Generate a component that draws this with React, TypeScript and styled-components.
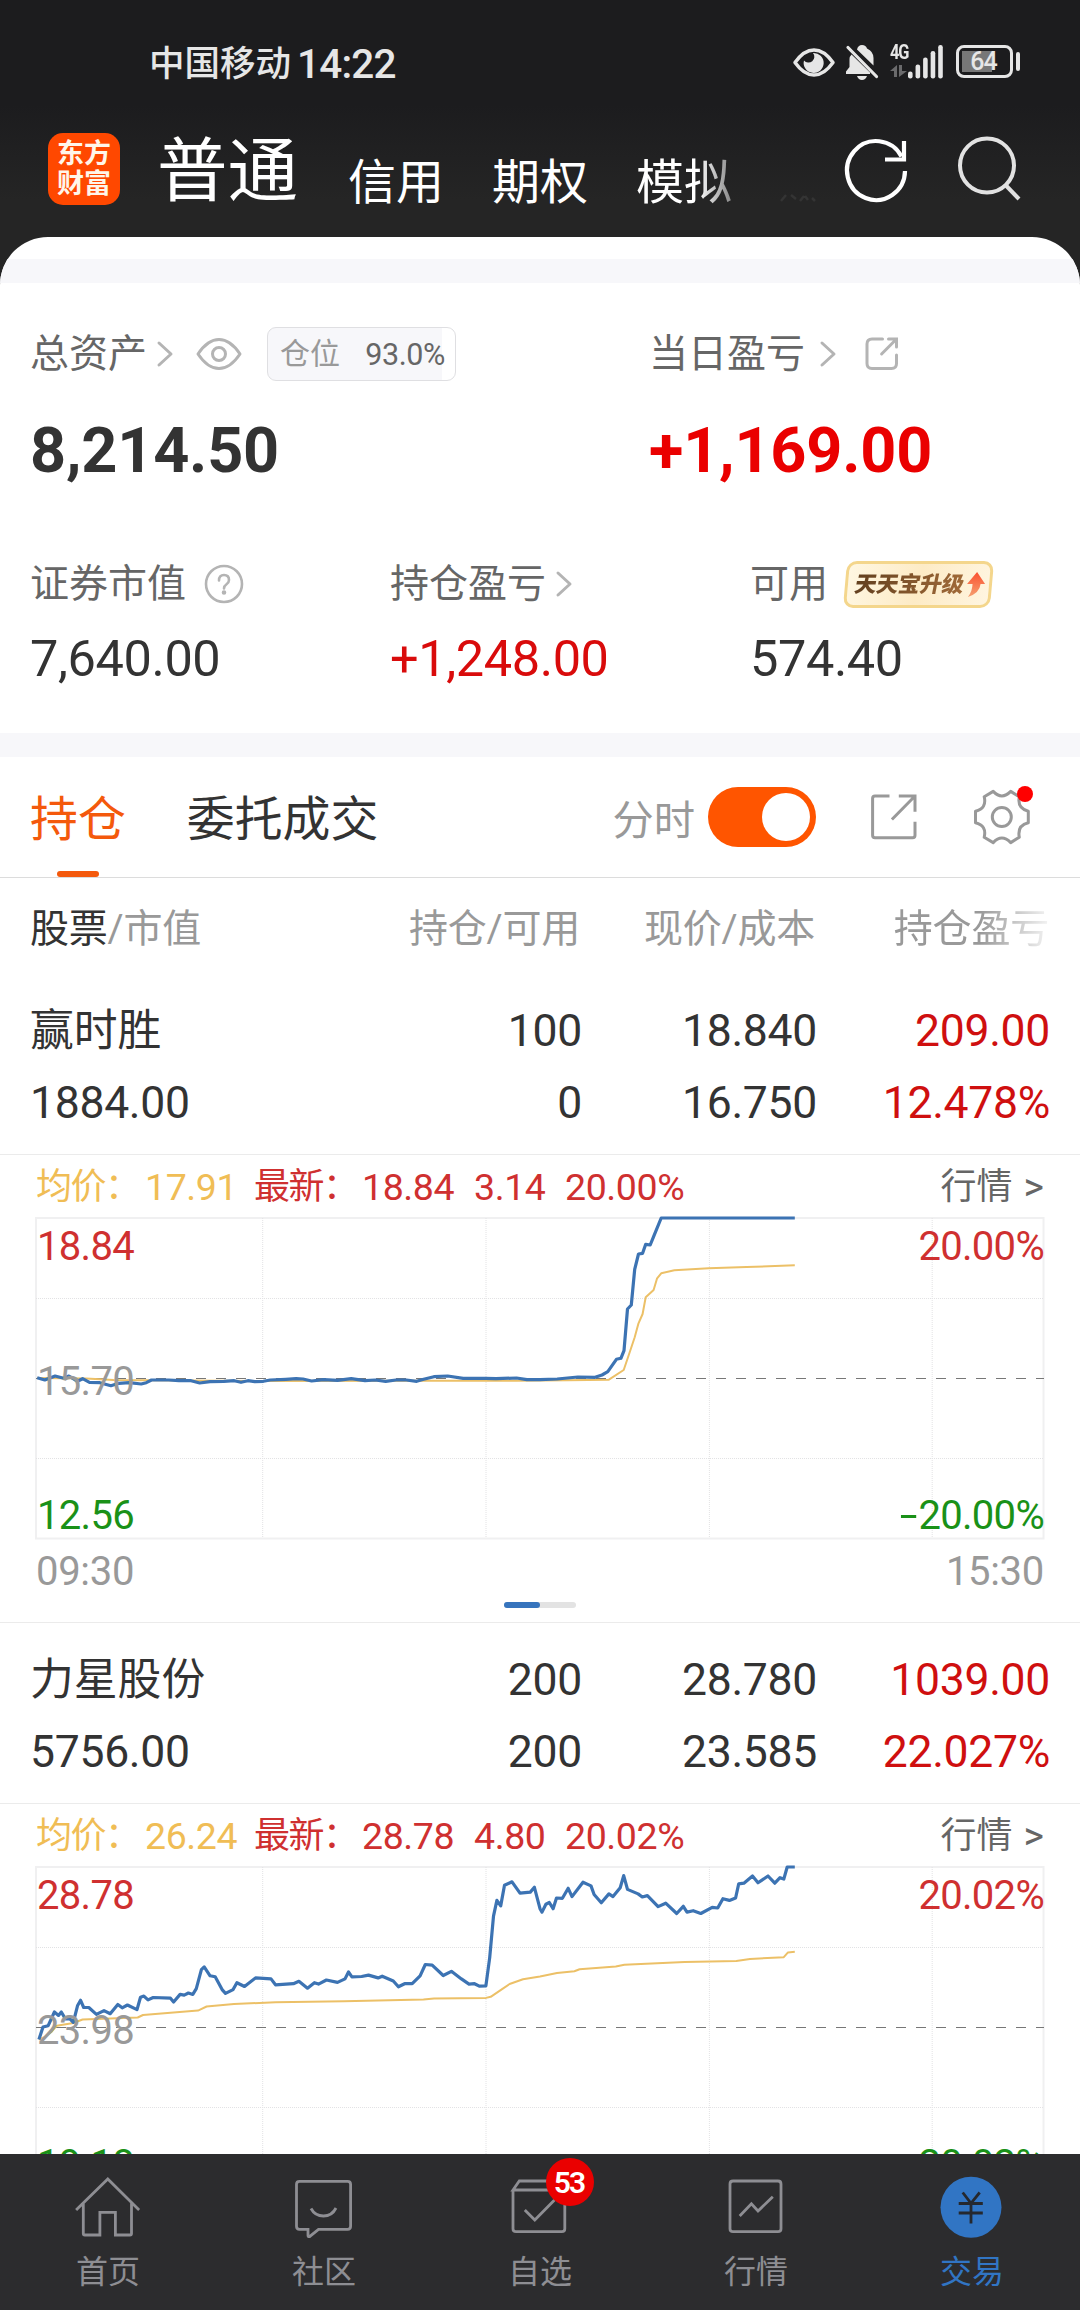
import React from 'react';
import styled, { createGlobalStyle, css } from 'styled-components';

const GlobalStyle = createGlobalStyle`
  *, *::before, *::after { box-sizing: border-box; }
  body {
    margin: 0;
    background: #fff;
    color: #333;
    font-family: Roboto, "Noto Sans CJK SC", sans-serif;
    -webkit-font-smoothing: antialiased;
  }
  svg { display: block; flex: none; overflow: visible; }
`;

const Screen = styled.div`
  width: 1080px;
  height: 2310px;
  overflow: hidden;
  display: flex;
  flex-direction: column;
  background: linear-gradient(#1c1c1e 0, #1c1c1e 105px, #252525 200px);
`;

/* ---------- status bar ---------- */

const StatusBar = styled.div`
  height: 127px;
  flex: none;
  display: flex;
  align-items: center;
  justify-content: space-between;
  padding: 1px 60px 0 149px;
  color: #e6e6e6;
`;

const Carrier = styled.div`
  display: flex;
  align-items: center;
  gap: 6px;
  font-size: 35.5px;
  font-weight: 500;
  line-height: 50px;
`;

const Clock = styled.span`
  font-size: 40.5px;
  letter-spacing: -0.8px;
`;

const StatusIcons = styled.div`
  display: flex;
  align-items: flex-start;
  height: 34px;
  margin-top: -4px;
`;

const Network = styled.div`
  display: flex;
  flex-direction: column;
  gap: 5px;
  margin-left: 11px;
  width: 20px;
  font-size: 21px;
  font-weight: 700;
  line-height: 15px;
  letter-spacing: -1.5px;
  span { display: block; transform: scaleX(0.78); transform-origin: left; }
`;

const Battery = styled.div`
  width: 57px;
  height: 33px;
  margin-left: 13px;
  padding-right: 2px;
  border: 3px solid #e6e6e6;
  border-radius: 8px;
  background: linear-gradient(#777, #777) 3px 3px / 30px 21px no-repeat;
  text-align: center;
  font-size: 25px;
  font-weight: 500;
  line-height: 28px;
  letter-spacing: -1px;
`;

const BatteryTip = styled.div`
  width: 4px;
  height: 19px;
  margin: 7px 0 0 3px;
  border-radius: 2px;
  background: #e6e6e6;
`;

/* ---------- account header ---------- */

const Header = styled.header`
  height: 110px;
  flex: none;
  display: flex;
  align-items: center;
  padding: 0 58px 26px 48px;
`;

const Logo = styled.div`
  width: 72px;
  height: 72px;
  border-radius: 15px;
  background: #ff4800;
  color: #fff6ea;
  display: flex;
  flex-direction: column;
  align-items: center;
  justify-content: center;
  font-size: 27px;
  font-weight: 700;
  line-height: 30px;
`;

const AccountTabs = styled.nav`
  display: flex;
  align-items: flex-start;
  align-self: flex-start;
  gap: 48px;
  width: 663px;
  margin-left: 37px;
  color: #fff;
  white-space: nowrap;
  svg { margin-top: 67px; }
`;

const AccountTab = styled.span<{ $active?: boolean; $faded?: boolean }>`
  padding-top: 14px;
  font-size: 48px;
  line-height: 84px;
  ${p => p.$active && css`
    padding-top: 3px;
    margin-right: 2px;
    font-size: 70.5px;
  `}
  ${p => p.$faded && css`
    mask-image: linear-gradient(90deg, #000 64%, rgba(0, 0, 0, 0.45) 100%);
  `}
`;

const HeaderIcons = styled.div`
  display: flex;
  align-items: center;
  gap: 51px;
  margin-left: 24.5px;
`;

/* ---------- content ---------- */

const Sheet = styled.main`
  flex: 1;
  min-height: 0;
  overflow: hidden;
  border-radius: 48px 48px 0 0;
  background: #fff;
  padding-top: 22px;
`;

const Band = styled.div`
  height: 24px;
  background: #f7f7fa;
`;

const Summary = styled.section`
  height: 450px;
  padding: 40px 30px 0;
`;

const SummaryRow = styled.div<{ $cols: string }>`
  display: grid;
  grid-template-columns: ${p => p.$cols};
`;

const Metric = styled.div`
  display: flex;
  flex-direction: column;
`;

const MetricLabel = styled.div`
  height: 62px;
  display: flex;
  align-items: center;
  color: #666;
  white-space: nowrap;
`;

const LabelText = styled.span`
  font-size: 39px;
  line-height: 50px;
`;

const BigValue = styled.div<{ $up?: boolean }>`
  height: 130px;
  line-height: 132px;
  font-size: 63px;
  font-weight: 700;
  letter-spacing: -0.2px;
  color: ${p => (p.$up ? '#ea0000' : '#333')};
`;

const Value = styled.div<{ $up?: boolean }>`
  height: 100px;
  line-height: 88px;
  font-size: 50.5px;
  letter-spacing: -0.4px;
  color: ${p => (p.$up ? '#d90b0b' : '#333')};
`;

const Position = styled.span`
  display: flex;
  align-items: center;
  justify-content: space-between;
  width: 189px;
  height: 54px;
  margin-left: 25px;
  padding: 0 10px 0 12px;
  border: 1px solid #dfdfe2;
  border-radius: 9px;
  background: linear-gradient(90deg, #f7f7fa 93%, #fff 93%);
  font-size: 30px;
  line-height: 50px;
  color: #999;
  b { padding-top: 2px; font-weight: 400; color: #666; font-size: 30.5px; letter-spacing: -0.4px; }
`;

const Upgrade = styled.span`
  display: flex;
  align-items: center;
  gap: 3px;
  width: 147px;
  height: 47px;
  margin-left: 17px;
  padding-left: 7px;
  border: 3px solid #f4d68c;
  border-radius: 10px;
  background: linear-gradient(100deg, #fff7e2, #fdebc6 50%, #fff5e0);
  transform: skewX(-5deg);
`;

const UpgradeText = styled.span`
  font-size: 22px;
  font-weight: 900;
  letter-spacing: -0.3px;
  line-height: 30px;
  transform: skewX(-6deg);
  color: transparent;
  background: linear-gradient(90deg, #63401f, #a16a38);
  background-clip: text;
  -webkit-background-clip: text;
`;

/* ---------- holdings toolbar ---------- */

const Toolbar = styled.div`
  height: 121px;
  display: flex;
  align-items: center;
  padding: 0 49px 0 30px;
  border-bottom: 1px solid #dcdcdc;
`;

const ViewTab = styled.div<{ $active?: boolean }>`
  height: 120px;
  margin-right: 61px;
  display: flex;
  flex-direction: column;
  align-items: center;
  justify-content: space-between;
  font-size: 47.9px;
  line-height: 127px;
  color: ${p => (p.$active ? '#f4590c' : '#333')};
  &::after {
    content: '';
    flex: none;
    width: 42px;
    height: 6px;
    margin-top: -13px;
    border-radius: 3px;
    background: ${p => (p.$active ? '#f4590c' : 'transparent')};
  }
`;

const Minute = styled.div`
  display: flex;
  align-items: center;
  gap: 13px;
  margin-left: auto;
  font-size: 41.3px;
  color: #999;
`;

const Toggle = styled.span`
  width: 108px;
  height: 60px;
  padding: 6px;
  display: flex;
  justify-content: flex-end;
  border-radius: 30px;
  background: #ff5500;
  &::after { content: ''; width: 48px; height: 48px; border-radius: 50%; background: #fff; }
`;

const ShareSlot = styled.div`
  margin: 0 54px 0 53px;
`;

const SettingSlot = styled.div`
  position: relative;
  &::after {
    content: '';
    position: absolute;
    right: -2px;
    top: -2px;
    width: 16px;
    height: 16px;
    border-radius: 50%;
    background: #ff0000;
  }
`;

/* ---------- table ---------- */

const gridColumns = css`
  display: grid;
  grid-template-columns: 300px 252px 235px 233px;
  padding: 0 30px;
`;

const TableHead = styled.div`
  ${gridColumns}
  height: 96px;
  line-height: 103px;
  font-size: 39px;
  letter-spacing: -0.2px;
  color: #999;
  text-align: right;
`;

const HeadCell = styled.div<{ $fade?: boolean }>`
  padding-right: 2px;
  white-space: nowrap;
  &:first-child { text-align: left; }
  b { font-weight: 400; color: #333; }
  ${p => p.$fade && css`
    padding-right: 1px;
    mask-image: linear-gradient(90deg, #000 70%, rgba(0, 0, 0, 0.1) 100%);
  `}
`;

const Holding = styled.div`
  ${gridColumns}
  height: 181px;
  padding-top: 21px;
  grid-auto-rows: 72px;
  line-height: 73px;
  font-size: 44.5px;
  letter-spacing: -0.3px;
  text-align: right;
  border-bottom: 1px solid #ebebeb;
`;

const Cell = styled.div<{ $name?: boolean; $left?: boolean; $up?: boolean }>`
  ${p => p.$left && 'text-align: left;'}
  ${p => p.$name && 'font-size: 43.8px; letter-spacing: 0;'}
  ${p => p.$up && 'color: #cf0f0f;'}
`;

/* ---------- minute chart ---------- */

const ChartBlock = styled.div`
  height: 468px;
  padding: 0 36px;
  border-bottom: 1px solid #ebebeb;
`;

const InfoLine = styled.div`
  display: grid;
  grid-template-columns: 109px 109px 108px 112px 91px 1fr auto;
  height: 63px;
  line-height: 64px;
  font-size: 36px;
  white-space: nowrap;
  color: #cf3030;
`;

const Caption = styled.span<{ $avg?: boolean }>`
  letter-spacing: -1.5px;
  ${p => p.$avg && 'color: #f0bd55;'}
`;

const Num = styled.span<{ $avg?: boolean }>`
  font-size: 37.5px;
  letter-spacing: -0.4px;
  ${p => p.$avg && 'color: #f0bd55;'}
`;

const Quote = styled.span`
  display: flex;
  gap: 11px;
  color: #666;
  b { font-weight: 400; font-size: 39px; }
`;

const Plot = styled.div`
  position: relative;
  height: 321px;
  padding: 8px 0 4px 1px;
  display: flex;
  flex-direction: column;
  justify-content: space-between;
  svg { position: absolute; left: 0; top: 0; }
`;

const Scale = styled.div<{ $tone: 'up' | 'flat' | 'down' }>`
  position: relative;
  display: flex;
  justify-content: space-between;
  height: 40px;
  line-height: 41px;
  font-size: 40px;
  letter-spacing: -0.7px;
  color: ${p => ({ up: '#cf3030', flat: '#999', down: '#1a9118' })[p.$tone]};
`;

const Minus = styled.span`
  display: inline-block;
  margin-right: 2px;
  transform: scaleX(1.6);
  transform-origin: right;
`;

const TimeAxis = styled.div`
  display: flex;
  justify-content: space-between;
  height: 63px;
  line-height: 66px;
  font-size: 40px;
  letter-spacing: -0.3px;
  color: #999;
`;

const Pager = styled.div`
  width: 72px;
  height: 6px;
  margin: 0 auto;
  border-radius: 3px;
  background: #e3e3e3;
  &::before {
    content: '';
    display: block;
    width: 36px;
    height: 6px;
    border-radius: 3px;
    background: #3674bd;
  }
`;

/* ---------- bottom navigation ---------- */

const BottomNav = styled.nav`
  height: 156px;
  flex: none;
  display: grid;
  grid-template-columns: repeat(5, 1fr);
  padding-top: 21px;
  background: #2c2c2e;
`;

const NavItem = styled.div<{ $active?: boolean }>`
  position: relative;
  display: flex;
  flex-direction: column;
  align-items: center;
  gap: 9px;
  font-size: 32px;
  line-height: 48px;
  color: ${p => (p.$active ? '#3175c4' : '#8e8e93')};
`;

const Badge = styled.span`
  position: absolute;
  left: 114px;
  top: -17px;
  width: 48px;
  height: 48px;
  padding-right: 2px;
  border-radius: 50%;
  background: #ea0000;
  color: #fff;
  text-align: center;
  font-size: 30px;
  font-weight: 600;
  line-height: 49px;
  letter-spacing: -2px;
`;

/* ---------- icons ---------- */

const Chevron = ({ gap }: { gap: number }) => (
  <svg width="16" height="26" viewBox="0 0 16 26" fill="none" stroke="#b4b4b4" strokeWidth="3" strokeLinecap="round" strokeLinejoin="round" style={{ marginLeft: gap }}>
    <path d="M2 2 14 13 2 24" />
  </svg>
);

const EyeOutline = () => (
  <svg width="46" height="34" viewBox="0 0 46 34" fill="none" stroke="#b4b4b4" strokeWidth="3" style={{ marginLeft: 23 }}>
    <path d="M2 17C8 8 15 2.500 23 2.500S38 8 44 17C38 26 31 31.500 23 31.500S8 26 2 17Z" strokeLinejoin="round" />
    <circle cx="23" cy="17" r="6.500" />
  </svg>
);

const ShareSmall = () => (
  <svg width="36" height="36" viewBox="0 0 36 36" fill="none" stroke="#b4b4b4" strokeWidth="3" strokeLinecap="round" style={{ marginLeft: 28 }}>
    <path d="M18.500 3H8Q3 3 3 8V27.500Q3 32.500 8 32.500H27.500Q32.500 32.500 32.500 27.500V19M24.500 3H32.500V11M17.600 18 32 3.500" />
  </svg>
);

const ShareLarge = () => (
  <svg width="50" height="50" viewBox="0 0 50 50" fill="none" stroke="#999" strokeWidth="3">
    <path d="M20.500 4H6Q3.600 4 3.600 6.400V43.300Q3.600 45.700 6 45.700H43.600Q46 45.700 46 43.300V29.700M29.800 4H46V19.700M22.900 27.500 46 4" />
  </svg>
);

const Gear = () => (
  <svg width="58" height="58" viewBox="0 0 58 58" fill="none" stroke="#999" strokeWidth="3" strokeLinejoin="round">
    <path d="M20.200 3.400Q28.800 12.500 37.700 3.400L46.300 8.700Q44 20.500 55.300 23.200V34.800Q44 37.500 46.300 49.300L37.700 54.600Q28.800 45.500 20.200 54.600L11.200 49.300Q14 37.500 2.500 34.800V23.200Q14 20.500 11.200 8.700Z" />
    <circle cx="28.800" cy="29" r="9.500" />
  </svg>
);

const Question = () => (
  <svg width="40" height="40" viewBox="0 0 40 40" fill="none" stroke="#b4b4b4" strokeWidth="2.600" style={{ marginLeft: 18 }}>
    <circle cx="20" cy="20" r="18" />
    <path d="M15 16.500Q15 11 20 11T25 16Q25 18.500 22.500 20.200T20 24.500" strokeLinecap="round" />
    <circle cx="20" cy="28.500" r="1" fill="#b4b4b4" />
  </svg>
);

const UpArrow = () => (
  <svg width="18" height="25" viewBox="0 0 18 25">
    <defs>
      <linearGradient id="up" x1="0" y1="0" x2="0" y2="1">
        <stop offset="0" stopColor="#fb5030" />
        <stop offset="1" stopColor="#f5a070" />
      </linearGradient>
    </defs>
    <path d="M9 0 18 12H13.500Q13.500 21 2 25Q6 19 5.500 12H0Z" fill="url(#up)" />
  </svg>
);

const Refresh = () => (
  <svg width="62" height="64" viewBox="0 0 62 64" fill="none" stroke="#fff" strokeWidth="4.200">
    <path d="M60 34A29 29.500 0 1 1 56.500 19.500" />
    <path d="M59 4V22.500H40" />
  </svg>
);

const Search = () => (
  <svg width="62" height="64" viewBox="0 0 62 64" fill="none" stroke="#e2e2e2" strokeWidth="4">
    <circle cx="29" cy="28.500" r="27" />
    <path d="M47 47.500 61 62" />
  </svg>
);

const VisionEye = () => (
  <svg width="42" height="29" viewBox="0 0 42 29" style={{ marginTop: 3 }}>
    <path d="M2 14.500C8 6 14 2 21 2S34 6 40 14.500C34 23 28 27 21 27S8 23 2 14.500Z" fill="none" stroke="#e6e6e6" strokeWidth="3.500" strokeLinejoin="round" />
    <path d="M20 5A10 10 0 1 1 11 12.500 4.800 4.800 0 1 0 20 5Z" fill="#e6e6e6" />
  </svg>
);

const Muted = () => (
  <svg width="33" height="35" viewBox="0 0 33 35" fill="#e6e6e6" style={{ marginLeft: 11 }}>
    <path d="M5.500 9.500 24 27.500V29H0V26.500L3.500 22V14Q3.500 11.500 5.500 9.500ZM11 4.500Q12 0 16 0T21 3.500Q27.500 6.500 27.500 13V20.500L11 4.500ZM11 31H21Q19.500 35 16 35T11 31Z" />
    <path d="M2 2.500 30.500 31.500" stroke="#e6e6e6" strokeWidth="3.200" strokeLinecap="round" />
  </svg>
);

const Traffic = () => (
  <svg width="17" height="12" viewBox="0 0 17 12" fill="#6a6a6c">
    <path d="M0 6 7 0V12H4V6ZM9 0H12V6H17L9 12Z" />
  </svg>
);

const SignalBars = () => (
  <svg width="35" height="34" viewBox="0 0 35 34" fill="#e6e6e6" style={{ marginLeft: -2 }}>
    {[7, 14, 21, 27.5, 33.5].map((h, i) => (
      <rect key={h} x={i * 7.55} y={33.5 - h} width="4.600" height={h} rx="2.200" />
    ))}
  </svg>
);

const navIcons: Record<string, React.ReactNode> = {
  首页: <path d="M1.100 35 32.800 4 64.100 35M8.300 28V58.500Q8.300 60 9.800 60H24.900V37.300H40.400V60H55Q56.500 60 56.500 58.500V28" />,
  社区: <path d="M8.500 6.300H56.600Q59.600 6.300 59.600 9.300V51.300Q59.600 54.300 56.600 54.300H27.500L18.500 61.600Q17 62 17 60.500V54.300H8.500Q5.500 54.300 5.500 51.300V9.300Q5.500 6.300 8.500 6.300ZM20 33.500Q24 41 32.500 41T45 33" />,
  自选: <path d="M6 15V53.700Q6 56.700 9 56.700H54.800Q57.800 56.700 57.800 53.700V15M6 15 12.300 6H51.500L57.800 15ZM17.800 35 27.800 45 47.500 25" />,
  行情: <path d="M10 6H55Q58 6 58 9V53.700Q58 56.700 55 56.700H10Q7 56.700 7 53.700V9Q7 6 10 6ZM16.700 41 28.400 28.800 35 36 49.800 21.700" />,
  交易: (
    <>
      <circle cx="32" cy="32.300" r="30.500" fill="#3175c4" stroke="none" />
      <path d="M23.700 17.500 32 28.300 40.700 17.500M19.700 28.500H43.800M19.700 38H43.800M32 28V48.500" stroke="#25282e" />
    </>
  ),
};

/* ---------- data ---------- */

interface Stock {
  name: string;
  marketValue: string;
  amount: string;
  available: string;
  price: string;
  cost: string;
  profit: string;
  ratio: string;
  avg: string;
  last: string;
  change: string;
  pct: string;
  base: string;
  low: string;
  priceLine: string;
  avgLine: string;
}

const stocks: Stock[] = [
  {
    name: '赢时胜', marketValue: '1884.00', amount: '100', available: '0', price: '18.840', cost: '16.750',
    profit: '209.00', ratio: '12.478%', avg: '17.91', last: '18.84', change: '3.14', pct: '20.00%', base: '15.70', low: '12.56',
    priceLine: '1.2,159.7 8.8,162 19.1,158 27.7,160.3 32.9,158 41.5,163.3 46.6,160.7 53.5,164.3 63.9,164.7 74.9,167.7 82.8,165.3 93.1,164.7 105.2,166 110.3,164.7 115.5,162 132.7,162 143,162.7 155.1,162.7 163.7,165 174,163.7 187.8,163.3 198.2,162.7 205,164.3 211.9,162.7 218.8,163.7 227.4,163.3 234.3,162 249.8,161.3 260.1,160.7 267,161 275.6,163 287.7,161.7 301.5,162.3 315.2,160.7 329,162.7 339.3,162 349.7,163.3 360,162 370.3,162 380.7,163.3 387.6,161.3 397.9,158.7 411.7,158 427.2,160.3 449.5,160.3 459.9,160.7 480.5,160 490.9,161.7 504,161.7 521.2,161 541.9,159 559.1,159.3 566,157 571.8,153.7 580.4,141.3 584.9,140.3 588,132.7 591.5,91 595.3,87 598.7,51.3 602.5,36 606.6,35.3 609.7,26.3 614.2,27 617.6,18.7 625.2,0 758.8,0',
    avgLine: '1.2,160 50,160.5 77.6,162 112,162.3 226,163 391,162.7 480.5,162.7 531.5,162.3 572.9,161.7 587.7,152 594.2,132.7 598.7,119.3 602.5,105.3 606.6,96 609.7,79.3 617.6,72 621.1,60.3 625.2,55.3 638.3,52.3 672.7,50.3 710.6,49 758.8,47.3',
  },
  {
    name: '力星股份', marketValue: '5756.00', amount: '200', available: '200', price: '28.780', cost: '23.585',
    profit: '1039.00', ratio: '22.027%', avg: '26.24', last: '28.78', change: '4.80', pct: '20.02%', base: '23.98', low: '19.18',
    priceLine: '2.9,172.5 7,160 12.2,158.7 18.4,145 22.5,148.4 25.3,145 29.4,151.9 33.9,151.9 37.3,155.3 41.5,138.8 44.6,133.3 47.7,140.5 52.8,140.5 60.4,147.4 68,143.6 74.2,146.7 81.8,137.4 86.2,140.8 91.4,138 101,142.6 104.5,130.2 107.9,129.1 112,132.9 117.2,130.5 134.5,131.2 137.6,135 144.1,127.4 148.2,128.1 152.4,126 156.8,127.4 160.3,121.6 165.4,102.6 168.2,99.9 174.1,108.8 179.2,109.8 186.1,122.6 189.5,126.4 197.1,122.6 200.9,115.7 208.5,119.5 219.5,110.9 235,111.9 239.5,117.8 257.4,116.7 262.9,114.3 271.5,121.2 278.4,115.7 282.5,117.1 290.4,113 301.5,115.4 309,111.9 312.5,105 315.9,109.8 325.6,109.5 332.5,108.1 342.1,110.9 346.2,109.2 357.3,114 362.4,119.8 368.6,116.7 376.2,116.7 384.1,108.8 389.3,97.5 396.2,98.1 407.2,108.5 415.4,104.3 425.4,111.9 433,117.1 438.5,116.7 443.3,119.1 449.9,118.8 453.7,90.6 457.5,49.2 460.9,33.4 464.7,38.9 468.5,18.3 476,14.8 484,26.2 494.3,25.1 498.4,20.3 504,41.7 506,45.1 509.9,37.2 513.3,35.5 517.1,41.7 520.5,31 526.4,31.3 532.2,21.3 536,29.6 547,15.2 555,18.9 558.1,27.5 565.3,35.8 572.9,26.9 577,29.6 584.2,20.7 587.7,8.6 591.5,22.4 602.1,26.9 606.3,30 611.4,28.6 622.1,39.6 629.7,36.2 640.7,46.5 647.3,39.3 651,45.1 657.2,43.7 664.8,46.5 676.2,40.3 681.7,41 686.9,31.7 693.4,33.4 699.6,31 702.7,16.9 707.9,16.2 716.5,9 722,15.8 732,9 738.8,16.2 744,10.7 747.8,12.1 751.2,0 758.8,0',
    avgLine: '2.9,172.5 8.8,169.8 15.7,164.6 20.8,158.7 37.3,156 46.6,152.5 101.7,150.5 107,148 162,143.6 170.6,139.5 198,137 239.5,135.3 308,134.3 387.5,132.6 398,131.5 450,130.9 454.7,129.8 465,122.9 473.6,117 487,112.3 504,109.5 521,106 538.4,104.3 543.6,102.3 579.8,99.5 588.4,97.8 648.6,95 700.3,94 714,92 747.8,90.2 752,85.4 758.8,84.7',
  },
];

const MinuteChart = ({ stock }: { stock: Stock }) => (
  <ChartBlock>
    <InfoLine>
      <Caption $avg>均价：</Caption>
      <Num $avg>{stock.avg}</Num>
      <Caption>最新：</Caption>
      <Num>{stock.last}</Num>
      <Num>{stock.change}</Num>
      <Num>{stock.pct}</Num>
      <Quote>行情<b>&gt;</b></Quote>
    </InfoLine>
    <Plot>
      <svg width="1008" height="321" viewBox="0 0 1008 321" fill="none">
        <rect x="0" y="0" width="1007.500" height="320.500" stroke="#f0f0f1" strokeWidth="2" />
        <path d="M226.700 0V320M450 0V320M673.400 0V320M896.200 0V320M0 80.500H1008M0 240.500H1008" stroke="#e2e2e4" strokeWidth="1" strokeDasharray="1 1" />
        <path d="M0 160.500H1008" stroke="#777" strokeWidth="1.200" strokeDasharray="10 10" />
        <polyline points={stock.avgLine} stroke="#ecc067" strokeWidth="2" strokeLinejoin="round" />
        <polyline points={stock.priceLine} stroke="#3c73b3" strokeWidth="3.200" strokeLinejoin="round" />
      </svg>
      <Scale $tone="up"><span>{stock.last}</span><span>{stock.pct}</span></Scale>
      <Scale $tone="flat"><span>{stock.base}</span></Scale>
      <Scale $tone="down"><span>{stock.low}</span><span><Minus>-</Minus>{stock.pct}</span></Scale>
    </Plot>
    <TimeAxis><span>09:30</span><span>15:30</span></TimeAxis>
    <Pager />
  </ChartBlock>
);

export default function App() {
  return (
    <Screen>
      <GlobalStyle />
      <StatusBar>
        <Carrier>中国移动<Clock>14:22</Clock></Carrier>
        <StatusIcons>
          <VisionEye />
          <Muted />
          <Network><span>4G</span><Traffic /></Network>
          <SignalBars />
          <Battery>64</Battery>
          <BatteryTip />
        </StatusIcons>
      </StatusBar>

      <Header>
        <Logo><span>东方</span><span>财富</span></Logo>
        <AccountTabs>
          <AccountTab $active>普通</AccountTab>
          <AccountTab>信用</AccountTab>
          <AccountTab>期权</AccountTab>
          <AccountTab $faded>模拟</AccountTab>
          <svg width="36" height="8" viewBox="0 0 36 8" stroke="#343434" strokeWidth="2.500" fill="none">
            <path d="M1 7 6 1M11 1 16 5M20 7 24 2M25 2 28 6M32 4 35 7" />
          </svg>
        </AccountTabs>
        <HeaderIcons><Refresh /><Search /></HeaderIcons>
      </Header>

      <Sheet>
        <Band />
        <Summary>
          <SummaryRow $cols="619px 1fr">
            <Metric>
              <MetricLabel>
                <LabelText>总资产</LabelText><Chevron gap={10} /><EyeOutline />
                <Position><span>仓位</span><b>93.0%</b></Position>
              </MetricLabel>
              <BigValue>8,214.50</BigValue>
            </Metric>
            <Metric>
              <MetricLabel><LabelText>当日盈亏</LabelText><Chevron gap={15} /><ShareSmall /></MetricLabel>
              <BigValue $up>+1,169.00</BigValue>
            </Metric>
          </SummaryRow>
          <SummaryRow $cols="360px 360px 1fr" style={{ marginTop: 38 }}>
            <Metric>
              <MetricLabel><LabelText>证券市值</LabelText><Question /></MetricLabel>
              <Value>7,640.00</Value>
            </Metric>
            <Metric>
              <MetricLabel><LabelText>持仓盈亏</LabelText><Chevron gap={10} /></MetricLabel>
              <Value $up>+1,248.00</Value>
            </Metric>
            <Metric>
              <MetricLabel>
                <LabelText>可用</LabelText>
                <Upgrade><UpgradeText>天天宝升级</UpgradeText><UpArrow /></Upgrade>
              </MetricLabel>
              <Value>574.40</Value>
            </Metric>
          </SummaryRow>
        </Summary>
        <Band />
        <Toolbar>
          <ViewTab $active>持仓</ViewTab>
          <ViewTab>委托成交</ViewTab>
          <Minute>分时<Toggle /></Minute>
          <ShareSlot><ShareLarge /></ShareSlot>
          <SettingSlot><Gear /></SettingSlot>
        </Toolbar>
        <TableHead>
          <HeadCell><b>股票</b>/市值</HeadCell>
          <HeadCell>持仓/可用</HeadCell>
          <HeadCell>现价/成本</HeadCell>
          <HeadCell $fade>持仓盈亏</HeadCell>
        </TableHead>
        {stocks.map(s => (
          <React.Fragment key={s.name}>
            <Holding>
              <Cell $left $name>{s.name}</Cell>
              <Cell>{s.amount}</Cell>
              <Cell>{s.price}</Cell>
              <Cell $up>{s.profit}</Cell>
              <Cell $left>{s.marketValue}</Cell>
              <Cell>{s.available}</Cell>
              <Cell>{s.cost}</Cell>
              <Cell $up>{s.ratio}</Cell>
            </Holding>
            <MinuteChart stock={s} />
          </React.Fragment>
        ))}
      </Sheet>

      <BottomNav>
        {Object.entries(navIcons).map(([label, icon]) => (
          <NavItem key={label} $active={label === '交易'}>
            <svg width="66" height="64" viewBox="0 0 66 64" fill="none" stroke="#8e8e93" strokeWidth="2.800">{icon}</svg>
            {label === '自选' && <Badge>53</Badge>}
            {label}
          </NavItem>
        ))}
      </BottomNav>
    </Screen>
  );
}
